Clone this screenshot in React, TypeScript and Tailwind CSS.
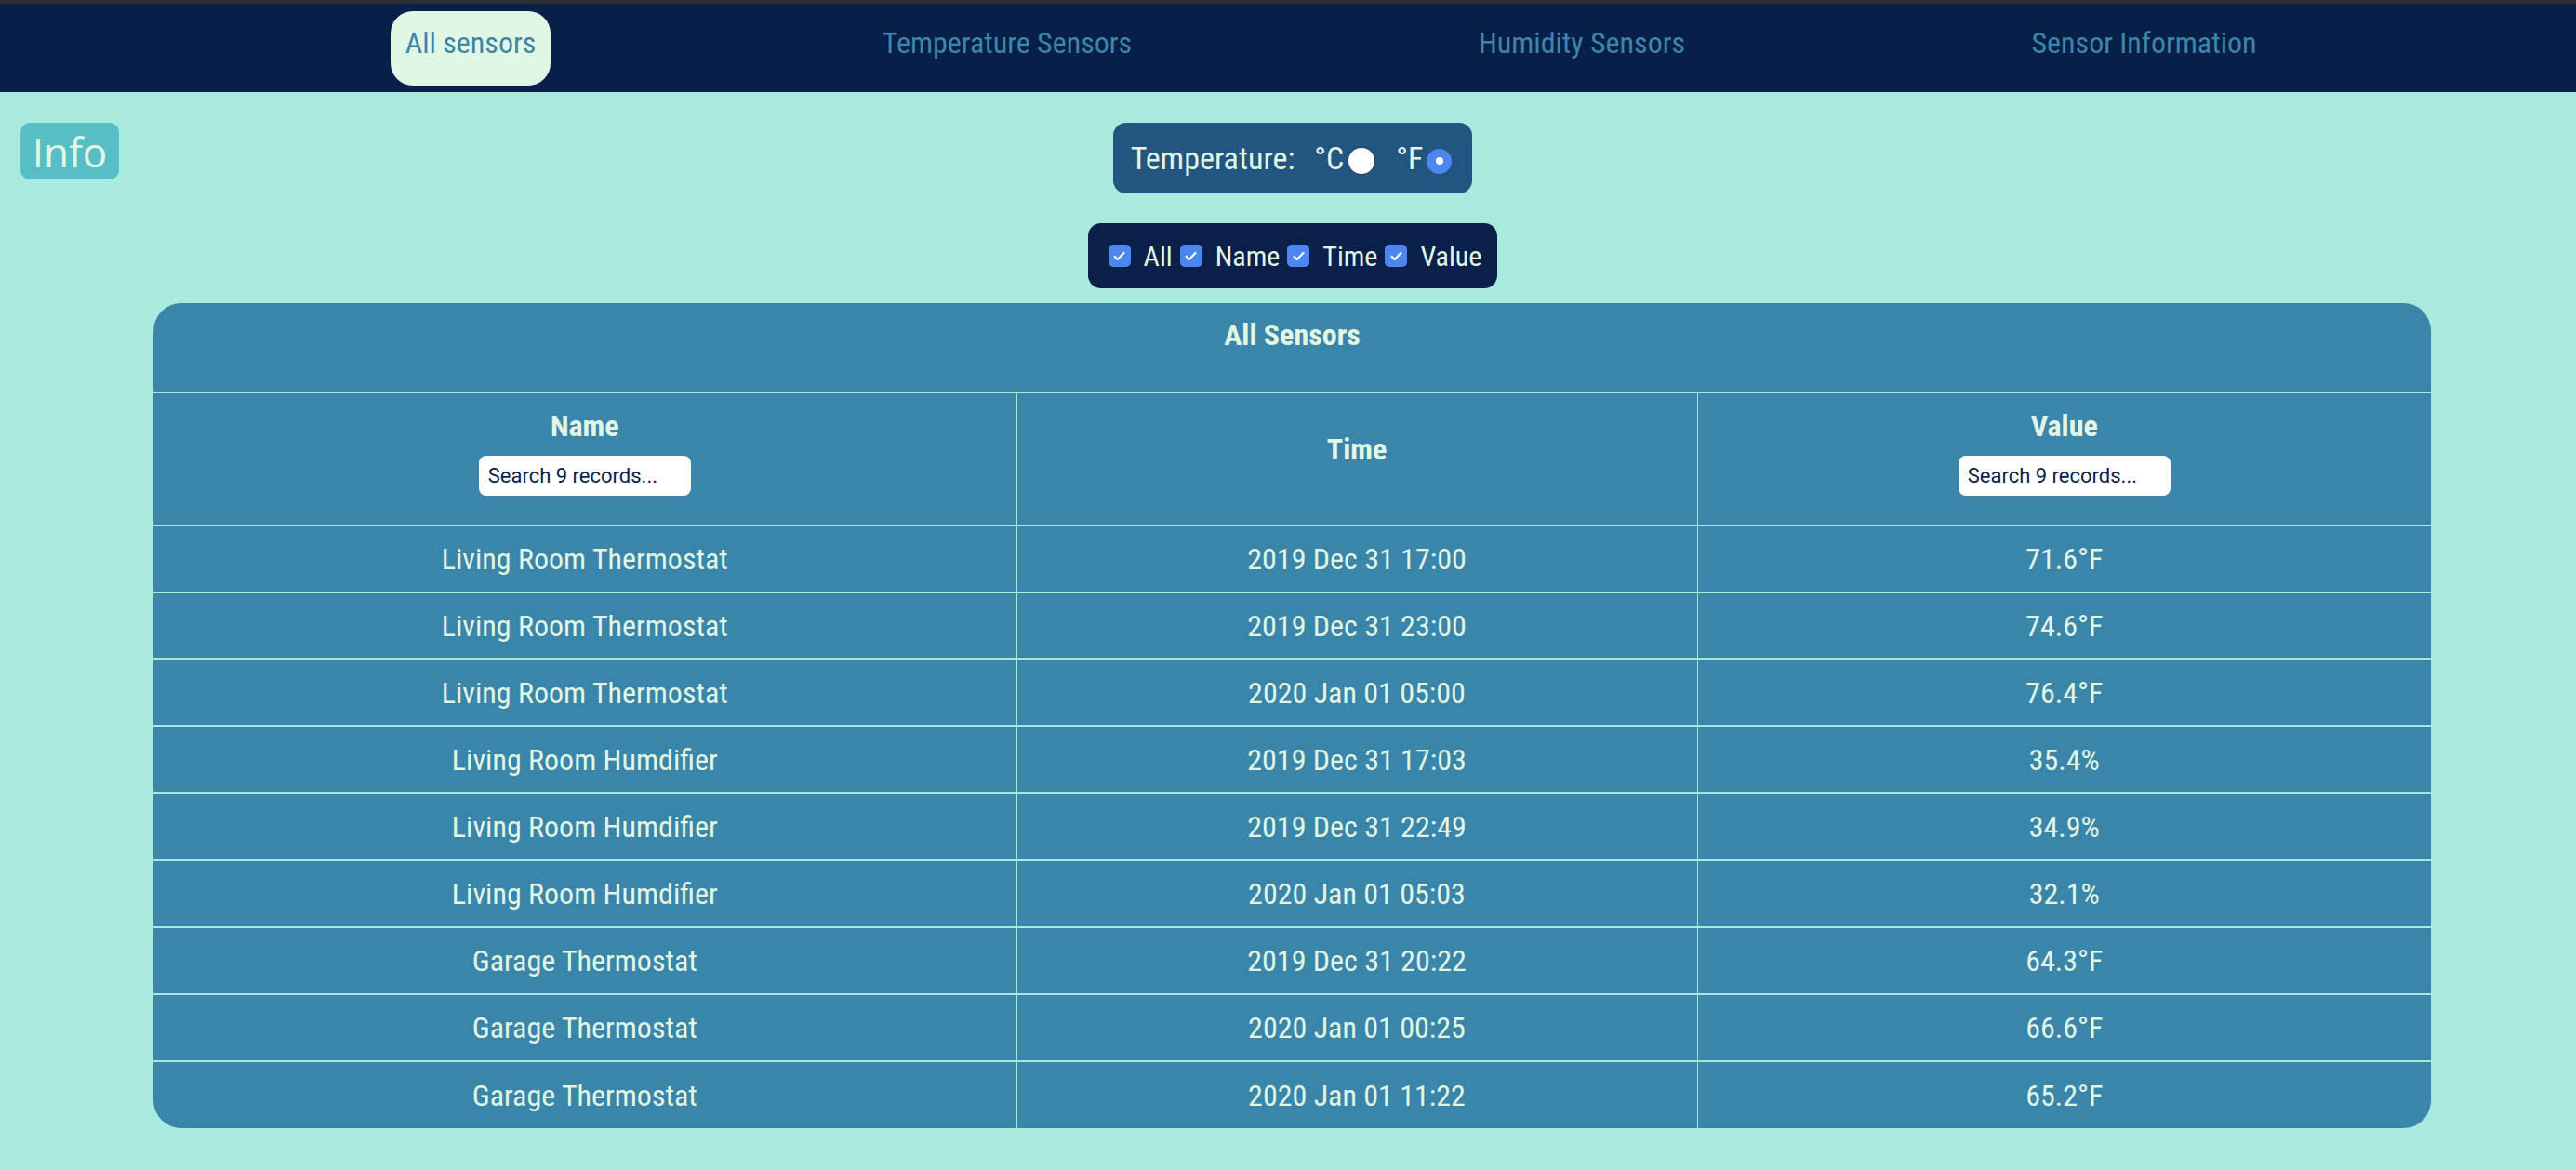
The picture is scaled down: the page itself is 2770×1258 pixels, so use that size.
import React from 'react';

const rows = [
  { name: 'Living Room Thermostat', time: '2019 Dec 31 17:00', value: '71.6°F' },
  { name: 'Living Room Thermostat', time: '2019 Dec 31 23:00', value: '74.6°F' },
  { name: 'Living Room Thermostat', time: '2020 Jan 01 05:00', value: '76.4°F' },
  { name: 'Living Room Humdifier', time: '2019 Dec 31 17:03', value: '35.4%' },
  { name: 'Living Room Humdifier', time: '2019 Dec 31 22:49', value: '34.9%' },
  { name: 'Living Room Humdifier', time: '2020 Jan 01 05:03', value: '32.1%' },
  { name: 'Garage Thermostat', time: '2019 Dec 31 20:22', value: '64.3°F' },
  { name: 'Garage Thermostat', time: '2020 Jan 01 00:25', value: '66.6°F' },
  { name: 'Garage Thermostat', time: '2020 Jan 01 11:22', value: '65.2°F' },
];

const navItems = [
  { label: 'All sensors', w: 'w-[172px]', active: true },
  { label: 'Temperature Sensors', w: 'w-[300px]', active: false },
  { label: 'Humidity Sensors', w: 'w-[254px]', active: false },
  { label: 'Sensor Information', w: 'w-[273px]', active: false },
];

const Check = ({ label }: { label: string }) => (
  <>
    <span className="w-[24px] h-[24px] rounded-[5px] bg-[#4c87f0] flex items-center justify-center">
      <svg viewBox="0 0 24 24" className="w-[17px] h-[17px]" fill="none" stroke="white" strokeWidth="3" strokeLinecap="round" strokeLinejoin="round">
        <path d="M5 12.5l4.5 4.5L19 7" />
      </svg>
    </span>
    <span className="ml-[14px] mr-[8px] last:mr-0">{label}</span>
  </>
);

const Search = () => (
  <div className="mt-[12px] flex justify-center">
    <input
      placeholder="Search 9 records..."
      className="w-[228px] h-[43px] rounded-[8px] bg-white px-[10px] font-['Roboto',sans-serif] font-stretch-normal text-[22px] font-normal text-[#0b1f4a] placeholder:text-[#0b1f4a] outline-none"
    />
  </div>
);

export default function App() {
  return (
    <div className="min-h-screen bg-[#aae9dd] font-['Roboto_Condensed',Roboto,sans-serif] font-stretch-condensed text-[#e2f6e4]">
      <div className="h-[4px] bg-[#2c2f33]" />
      <nav className="h-[95px] bg-[#081f4a] flex items-start pt-[8px] pl-[420px] gap-[341px]">
        {navItems.map((n) => (
          <div
            key={n.label}
            className={`${n.w} h-[80px] pt-[14px] text-center text-[32px] leading-[40px] text-[#3c86aa] ${n.active ? 'bg-[#e1f7e6] rounded-[24px]' : ''}`}
          >
            {n.label}
          </div>
        ))}
      </nav>

      <main className="relative pl-[10px] pt-[33px] pb-[46px] flex flex-col items-center">
        <div className="absolute left-[22px] top-[33px] w-[106px] h-[61px] rounded-[10px] bg-[#56bfc5] flex items-center justify-center font-['Open_Sans',sans-serif] font-stretch-normal text-[44px] leading-none text-[#e2f7e5]">
          Info
        </div>

        <div className="h-[76px] rounded-[14px] bg-[#22557f] flex items-center pl-[19px] pr-[22px] text-[34px]">
          <span>Temperature:</span>
          <span className="ml-[21px]">°C</span>
          <span className="ml-[5px] mt-[6px] w-[28px] h-[28px] rounded-full bg-white shadow-[0_0_2px_rgba(0,0,0,0.4)]" />
          <span className="ml-[23px]">°F</span>
          <span className="ml-[4px] mt-[6px] w-[27px] h-[27px] rounded-full bg-[#4c87f0] flex items-center justify-center">
            <span className="w-[8px] h-[8px] rounded-full bg-white" />
          </span>
        </div>

        <div className="mt-[32px] h-[70px] rounded-[14px] bg-[#0a1f49] flex items-center pl-[22px] pr-[17px] text-[30px]">
          <Check label="All" />
          <Check label="Name" />
          <Check label="Time" />
          <Check label="Value" />
        </div>

        <div className="mt-[16px] w-[2450px] rounded-[30px] overflow-hidden bg-[#3a85aa] border-r border-[#a8e8dc]">
          <table className="w-full table-fixed border-collapse">
            <colgroup>
              <col className="w-[928px]" />
              <col className="w-[732px]" />
              <col />
            </colgroup>
            <thead>
              <tr>
                <th colSpan={3} className="h-[96px] align-top pt-[14px] text-[32px] leading-[40px] font-bold border-b-2 border-[#a8e8dc]">
                  All Sensors
                </th>
              </tr>
              <tr className="h-[143px]">
                <th className="align-top pt-[15px] text-[32px] leading-[40px] font-bold">
                  <div>Name</div>
                  <Search />
                </th>
                <th className="align-top pt-[40px] text-[32px] leading-[40px] font-bold border-l border-[#a8e8dc]">Time</th>
                <th className="align-top pt-[15px] text-[32px] leading-[40px] font-bold border-l border-[#a8e8dc]">
                  <div>Value</div>
                  <Search />
                </th>
              </tr>
            </thead>
            <tbody>
              {rows.map((r, i) => (
                <tr key={i} className="h-[72px] border-t-2 border-[#a8e8dc] text-[32px] text-center">
                  <td>{r.name}</td>
                  <td className="border-l border-[#a8e8dc]">{r.time}</td>
                  <td className="border-l border-[#a8e8dc]">{r.value}</td>
                </tr>
              ))}
            </tbody>
          </table>
        </div>
      </main>
    </div>
  );
}
